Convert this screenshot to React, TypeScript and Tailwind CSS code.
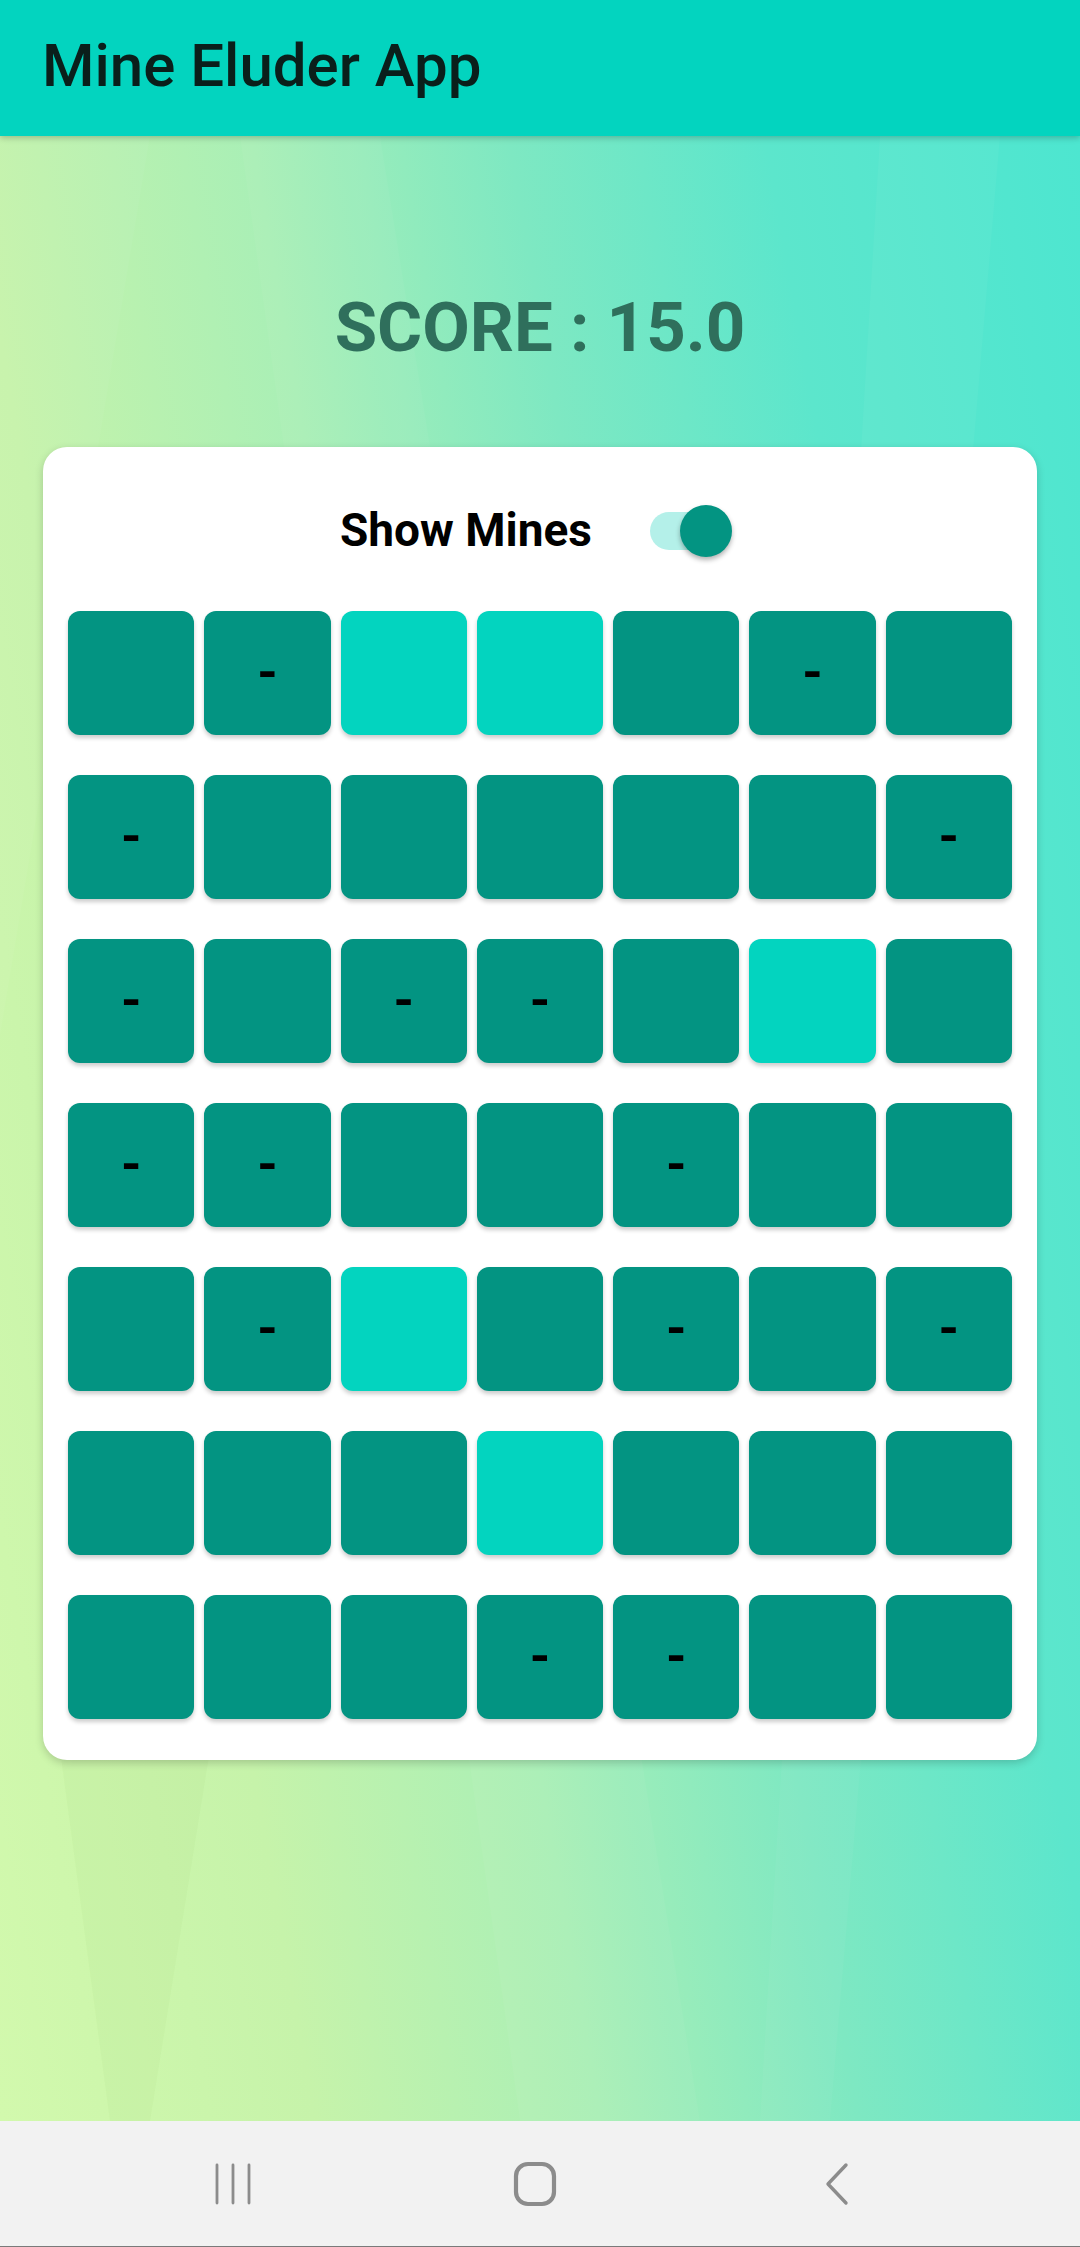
import { useState } from "react";

// 1 = revealed (light), 0 = hidden, "-" marks a hidden cell showing a mine hint
const board: { open: boolean; mark: boolean }[][] = [
  "0 0- 1 1 0 0- 0",
  "0- 0 0 0 0 0 0-",
  "0- 0 0- 0- 0 1 0",
  "0- 0- 0 0 0- 0 0",
  "0 0- 1 0 0- 0 0-",
  "0 0 0 1 0 0 0",
  "0 0 0 0- 0- 0 0",
].map((row) =>
  row.split(" ").map((c) => ({ open: c.startsWith("1"), mark: c.endsWith("-") }))
);

const Toggle = ({ on, onChange }: { on: boolean; onChange: () => void }) => (
  <button type="button" onClick={onChange} className="relative w-[82px] h-[52px] shrink-0">
    <span
      className={
        "absolute left-0 top-[7px] w-[74px] h-[38px] rounded-full " +
        (on ? "bg-[#b4f0e9]" : "bg-[#c9c9c9]")
      }
    />
    <span
      className={
        "absolute top-0 w-[52px] h-[52px] rounded-full shadow-[0_3px_5px_rgba(0,0,0,0.3)] " +
        (on ? "right-0 bg-[#039482]" : "left-[-8px] bg-[#f5f5f5]")
      }
    />
  </button>
);

const NavBar = () => (
  <div className="h-[126px] shrink-0 bg-[#f2f2f2] border-b border-[#7a7a7a] grid grid-cols-[302px_302px_302px] pl-[82px] items-center justify-items-center">
    <svg width="40" height="42" viewBox="0 0 40 42">
      <g stroke="#8c8c8c" strokeWidth="2.8" strokeLinecap="round">
        <line x1="4" y1="2" x2="4" y2="40" />
        <line x1="20" y1="2" x2="20" y2="40" />
        <line x1="36" y1="2" x2="36" y2="40" />
      </g>
    </svg>
    <svg width="44" height="46" viewBox="0 0 44 46">
      <rect x="3" y="3" width="38" height="40" rx="12" fill="none" stroke="#8c8c8c" strokeWidth="4.2" />
    </svg>
    <svg width="30" height="44" viewBox="0 0 30 44">
      <polyline
        points="24,3 6,22 24,41"
        fill="none"
        stroke="#8c8c8c"
        strokeWidth="3.4"
        strokeLinecap="round"
        strokeLinejoin="round"
      />
    </svg>
  </div>
);

export default function App() {
  const [showMines, setShowMines] = useState(true);

  return (
    <div className="w-[1080px] h-[2247px] flex flex-col font-['Roboto','Liberation_Sans',sans-serif] overflow-hidden">
      {/* Toolbar */}
      <header className="relative z-10 h-[136px] shrink-0 bg-[#03d4bf] shadow-[0_2px_6px_rgba(0,0,0,0.22)] flex items-center pl-[42px] pb-[5px]">
        <h1 className="text-[60px] font-medium text-[#0a1f1b]">Mine Eluder App</h1>
      </header>

      {/* Content */}
      <main className="relative flex-1 flex flex-col items-center bg-[linear-gradient(80deg,#d2f9ad_0%,#c6f3aa_22%,#a9efb6_42%,#7ee8c2_60%,#5ce6cc_78%,#4de6d0_100%)] overflow-hidden">
        {/* faint facets of the background artwork */}
        <svg className="absolute inset-0 w-full h-full pointer-events-none" viewBox="0 0 1080 1985" preserveAspectRatio="none">
          <polygon points="60,1614 210,1614 150,1985 110,1985" fill="#6a8f3a" opacity="0.04" />
          <polygon points="240,0 380,0 700,1985 520,1985" fill="#ffffff" opacity="0.04" />
          <polygon points="880,0 1000,0 830,1985 760,1985" fill="#ffffff" opacity="0.04" />
          <polygon points="0,0 150,0 0,900" fill="#ffffff" opacity="0.04" />
        </svg>

        <h2 className="relative mt-[140px] text-[69px] font-bold text-[#2f6f5c]">SCORE : 15.0</h2>

        <section className="relative mt-[67px] w-[994px] bg-white rounded-[24px] shadow-[0_3px_8px_rgba(0,0,0,0.18)] pt-[58px] pb-[41px] px-[25px]">
          <div className="flex items-center justify-center gap-[58px] pr-[8px] h-[52px]">
            <span className="text-[46px] font-bold text-black">Show Mines</span>
            <Toggle on={showMines} onChange={() => setShowMines(!showMines)} />
          </div>

          <div className="mt-[54px] grid grid-cols-7 gap-x-[10px] gap-y-[40px]">
            {board.flat().map((cell, i) => (
              <div
                key={i}
                className={
                  "h-[124px] rounded-[12px] shadow-[0_3px_4px_rgba(0,0,0,0.2)] flex items-center justify-center text-[52px] font-bold text-black " +
                  (cell.open ? "bg-[#03d4bf]" : "bg-[#039482]")
                }
              >
                {showMines && cell.mark ? "-" : ""}
              </div>
            ))}
          </div>
        </section>
      </main>

      <NavBar />
    </div>
  );
}
